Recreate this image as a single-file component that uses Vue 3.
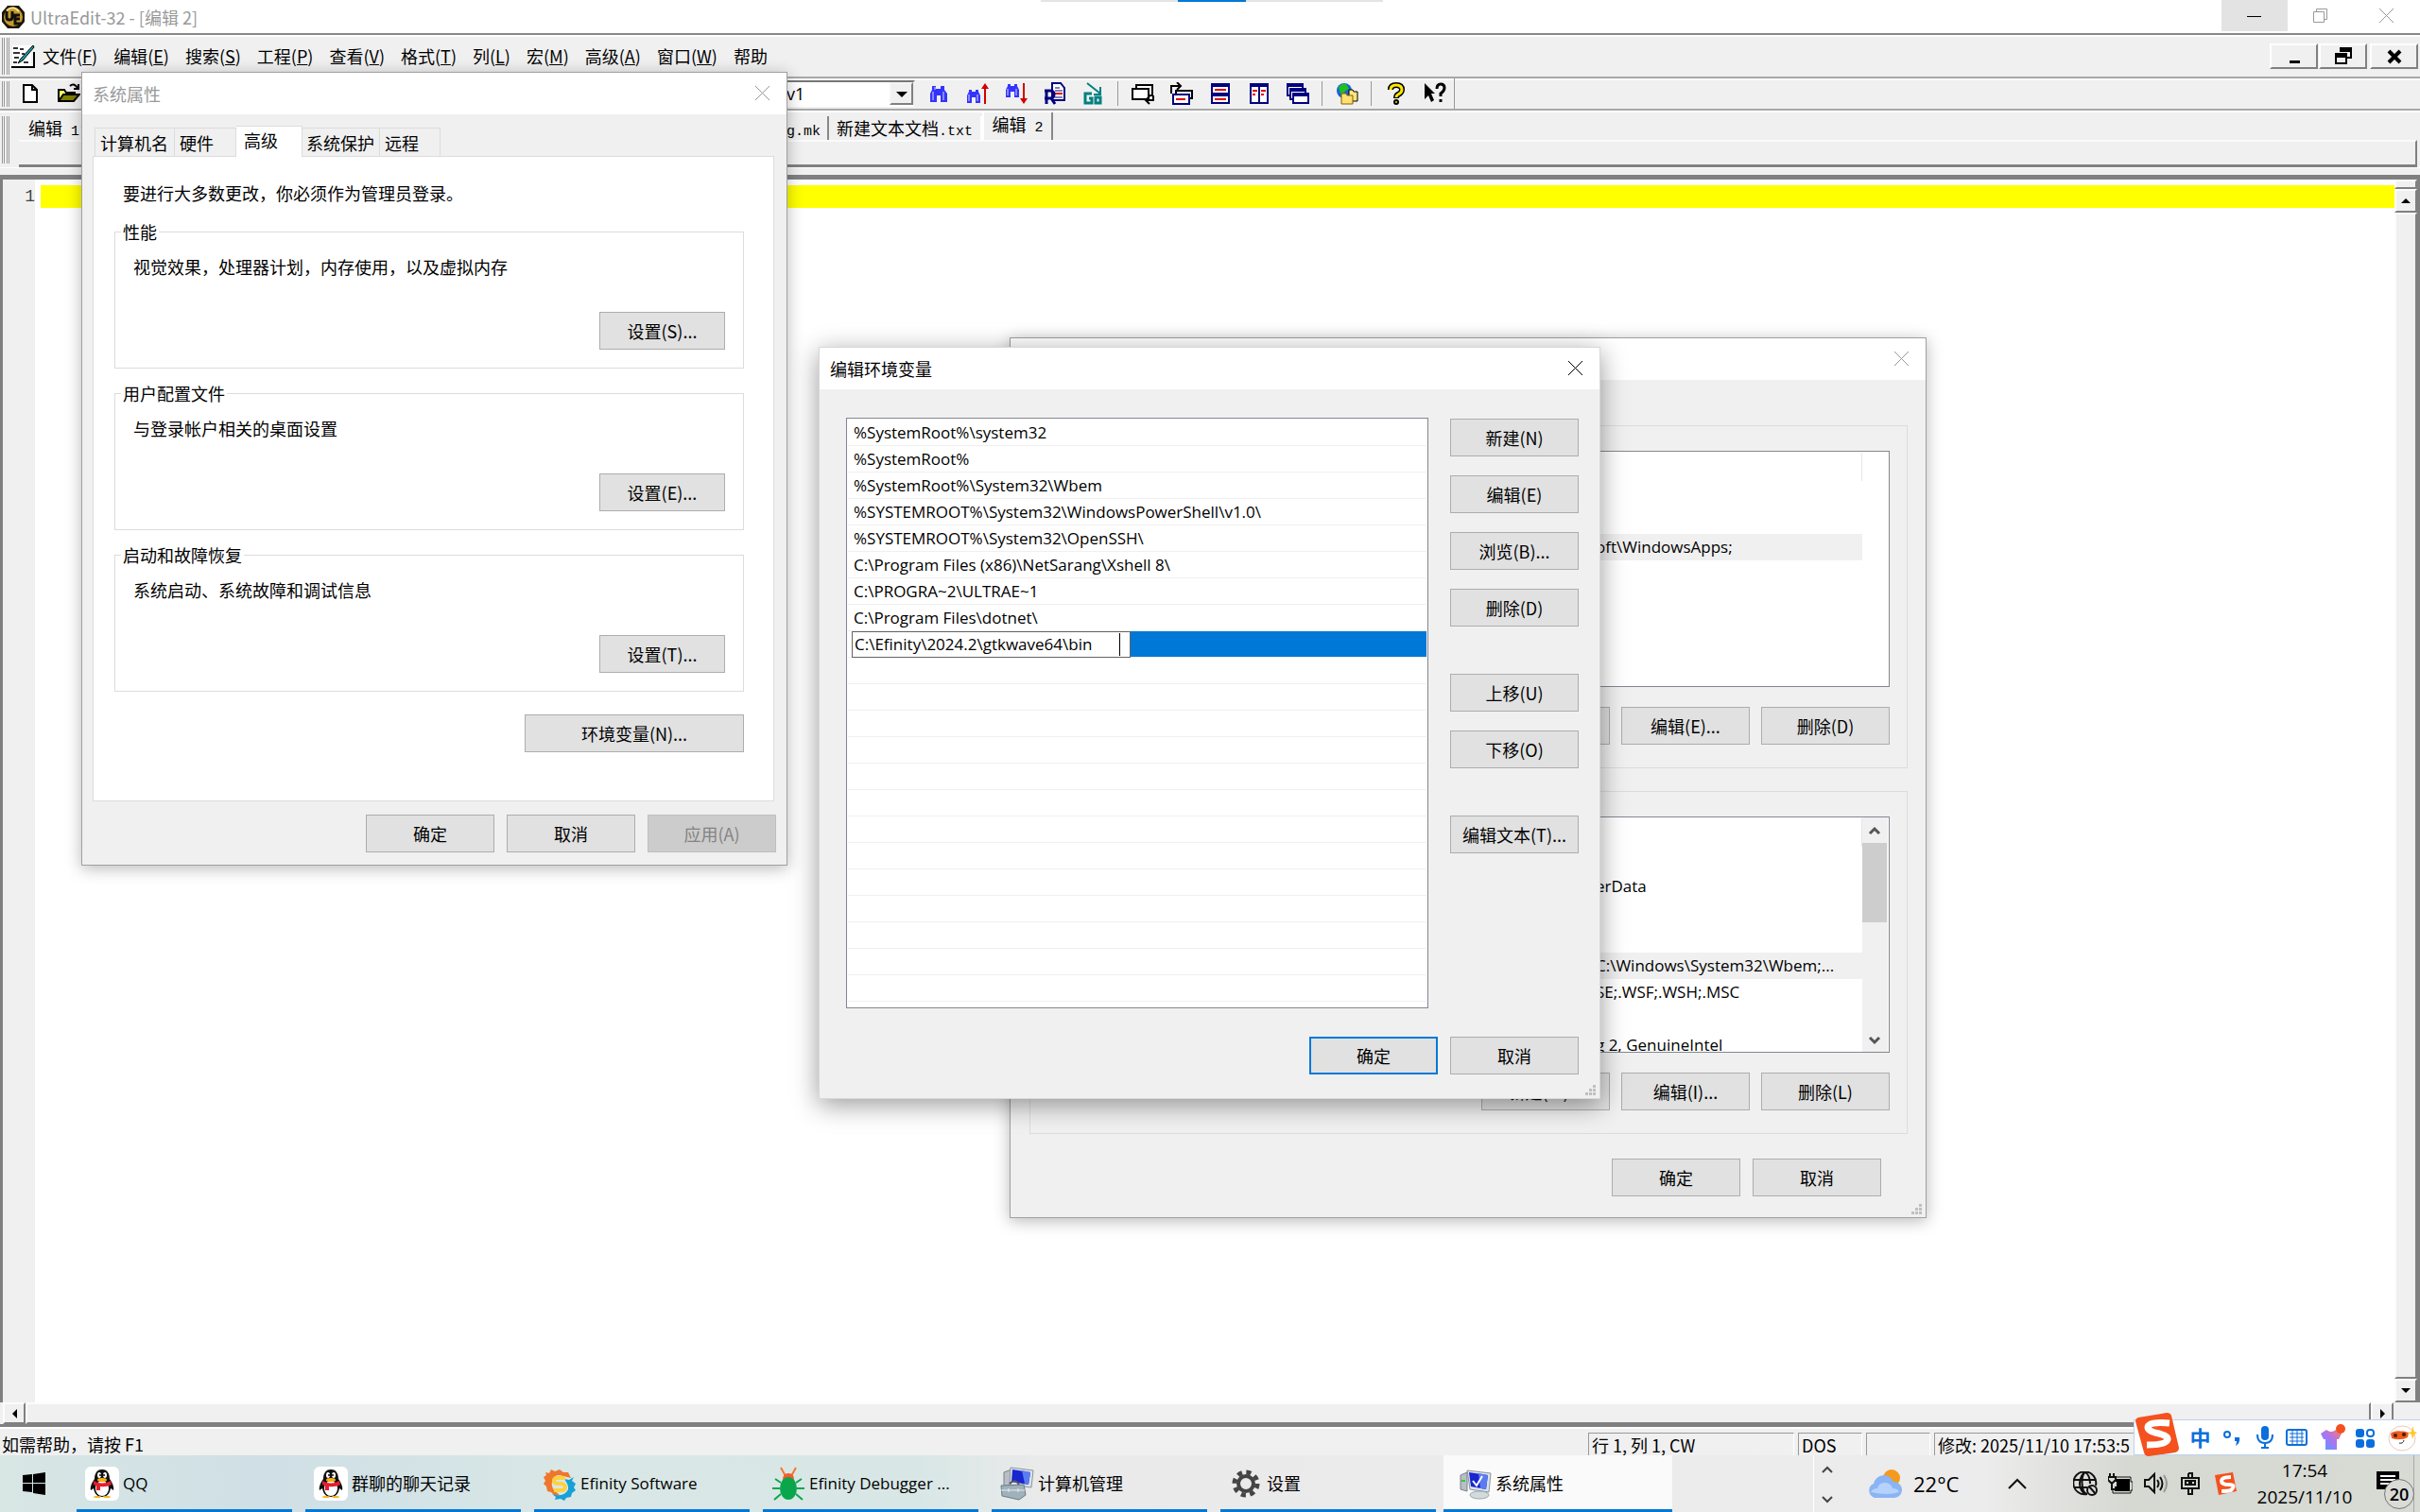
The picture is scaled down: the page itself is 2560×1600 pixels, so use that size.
<script setup>
import { ref } from 'vue'

const menus = [
  { text: '文件', key: 'F' },
  { text: '编辑', key: 'E' },
  { text: '搜索', key: 'S' },
  { text: '工程', key: 'P' },
  { text: '查看', key: 'V' },
  { text: '格式', key: 'T' },
  { text: '列', key: 'L' },
  { text: '宏', key: 'M' },
  { text: '高级', key: 'A' },
  { text: '窗口', key: 'W' },
  { text: '帮助' }
]

const propTabs = ['计算机名', '硬件', '高级', '系统保护', '远程']
const activeTab = ref('高级')

const groups = [
  { title: '性能', text: '视觉效果，处理器计划，内存使用，以及虚拟内存', button: '设置(S)...' },
  { title: '用户配置文件', text: '与登录帐户相关的桌面设置', button: '设置(E)...' },
  { title: '启动和故障恢复', text: '系统启动、系统故障和调试信息', button: '设置(T)...' }
]

const userVars = ['', '', 'oft\\WindowsApps;', '', '', '']
const systemVars = [
  '',
  '',
  'erData',
  '',
  '',
  'C:\\Windows\\System32\\Wbem;...',
  'SE;.WSF;.WSH;.MSC',
  '',
  'g 2, GenuineIntel'
]

const paths = [
  '%SystemRoot%\\system32',
  '%SystemRoot%',
  '%SystemRoot%\\System32\\Wbem',
  '%SYSTEMROOT%\\System32\\WindowsPowerShell\\v1.0\\',
  '%SYSTEMROOT%\\System32\\OpenSSH\\',
  'C:\\Program Files (x86)\\NetSarang\\Xshell 8\\',
  'C:\\PROGRA~2\\ULTRAE~1',
  'C:\\Program Files\\dotnet\\'
]
const editing = ref('C:\\Efinity\\2024.2\\gtkwave64\\bin')
const emptyRows = 13

const tasks = [
  { icon: 'qq', text: 'QQ' },
  { icon: 'qq', text: '群聊的聊天记录' },
  { icon: 'efinity', text: 'Efinity Software' },
  { icon: 'bug', text: 'Efinity Debugger ...' },
  { icon: 'manage', text: '计算机管理' },
  { icon: 'gear', text: '设置' },
  { icon: 'system', text: '系统属性', active: true }
]

function isLatin(text) {
  return /^[\x20-\x7e]+$/.test(text)
}
</script>

<template>
  <div class="screen">
    <!-- UltraEdit -->
    <header class="titlebar">
      <svg class="app-icon" width="26" height="26" viewBox="0 0 26 26">
        <path d="M7 1h12l6 7v10l-6 7H7l-6-7V8z" fill="#1a1608" />
        <circle cx="13" cy="13" r="10" fill="#c79a2c" />
        <path d="M6 6q7-6 13 1" stroke="#f5e08b" stroke-width="2" fill="none" />
        <path d="M6 7v6q0 3 3 3t3-3V7M20 11h-5v9h6M15 15h5" stroke="#111" stroke-width="3" fill="none" />
      </svg>
      <span class="caption">UltraEdit-32 - [编辑 2]</span>
      <div class="top-hint"><i></i></div>
      <div class="caption-buttons">
        <button class="cap min" aria-label="最小化">
          <svg width="16" height="16"><path d="M0 8.5h15" stroke="#000" /></svg>
        </button>
        <button class="cap" aria-label="还原">
          <svg width="16" height="16"><path d="M.5 3.500h11v11H.5zM3.500 3V.5h11v11H12" stroke="#999" fill="none" /></svg>
        </button>
        <button class="cap" aria-label="关闭">
          <svg width="16" height="16"><path d="M0 0l15 15M15 0L0 15" stroke="#999" /></svg>
        </button>
      </div>
    </header>

    <nav class="menubar">
      <i class="grip"></i>
      <svg class="doc-icon" width="25" height="25" viewBox="0 0 25 25">
        <path d="M1 1h20v22H1z" fill="#fff" />
        <path d="M0 24h24V8" stroke="#000" stroke-width="2" fill="none" />
        <path d="M2 3h5v2H2zM9 4h4v2H9zM2 8h7v2H2zM11 9h3v2h-3zM3 13h5v2H3zM2 18h4v2H2zM13 18h5v2h-5z" fill="#333" />
        <path d="M23 1L10 15l-3 5 5-3L24 3z" fill="#18a0a8" stroke="#000" />
      </svg>
      <a v-for="m in menus" :key="m.text" href="#" class="menu">{{ m.text }}<template v-if="m.key">(<u>{{ m.key }}</u>)</template></a>
      <div class="mdi-buttons">
        <button aria-label="最小化子窗口"><svg width="18" height="18"><path d="M4 14h11v3H4z" /></svg></button>
        <button aria-label="还原子窗口">
          <svg width="18" height="18"><path d="M5 1h12v10h-4M6 2h10v2H6zM1 7h11v10H1zM1 8h10v2H1z" fill="none" stroke="#000" stroke-width="2" /></svg>
        </button>
        <button class="apart" aria-label="关闭子窗口"><svg width="18" height="18"><path d="M3 4l12 12M15 4L3 16" stroke="#000" stroke-width="4" /></svg></button>
      </div>
    </nav>

    <div class="toolbar">
      <i class="grip"></i>
      <button aria-label="新建">
        <svg width="24" height="24"><path d="M5 3h9l5 5v13H5zM14 3v5h5" fill="#fff" stroke="#000" stroke-width="2" /></svg>
      </button>
      <button aria-label="打开">
        <svg width="24" height="24">
          <path d="M1 20V8h6l2 3h9v4" fill="#ff6" stroke="#000" stroke-width="2" />
          <path d="M1 20l5-7h17l-6 7z" fill="#808000" stroke="#000" stroke-width="2" />
          <path d="M13 4q4-4 8 2M22 2v5h-5" fill="none" stroke="#000" stroke-width="2" />
        </svg>
      </button>
      <div class="combo">
        <select aria-label="查找内容"><option>v1</option></select>
        <span class="combo-arrow"></span>
      </div>
      <button aria-label="查找">
        <svg width="24" height="24">
          <path d="M3 21v-9l2-4V4h4v3h5V4h4v4l3 4v9h-7v-7h-4v7z" fill="#33f" />
          <path d="M6 10v9M17 10v9M8 5v3" stroke="#dde" stroke-width="1" />
        </svg>
      </button>
      <button aria-label="查找上一个">
        <svg width="24" height="24">
          <path d="M1 22v-8l2-4V8h3v2h4V8h3v2l2 4v8h-5v-6H6v6z" fill="#33f" />
          <path d="M3 13v7M12 13v7" stroke="#dde" />
          <path d="M20 23V5" stroke="#d00000" stroke-width="2" /><path d="M16 7l4-6 4 6z" fill="#d00000" />
        </svg>
      </button>
      <button aria-label="查找下一个">
        <svg width="24" height="24">
          <path d="M1 16V8l2-4V2h3v2h4V2h3v2l2 4v8h-5v-6H6v6z" fill="#33f" />
          <path d="M3 7v7M12 7v7" stroke="#dde" />
          <path d="M20 1v18" stroke="#d00000" stroke-width="2" /><path d="M16 17l4 6 4-6z" fill="#d00000" />
        </svg>
      </button>
      <button aria-label="替换">
        <svg width="24" height="24">
          <path d="M9 1h9l4 5v13H9z" fill="#fff" stroke="#000080" stroke-width="2" />
          <path d="M12 6h5M12 9h8M12 16h8" stroke="#000080" /><path d="M12 12h8" stroke="#e00000" stroke-width="2" />
          <path d="M1 9h6q4 0 4 4t-4 4H1M8 17l4 6M3 8v15" stroke="#000080" stroke-width="3" fill="none" />
        </svg>
      </button>
      <button aria-label="转到">
        <svg width="24" height="24">
          <path d="M5 1l14 11M19 5v8h-7" stroke="#008080" fill="none" stroke-width="2" />
          <path d="M10 12H3v10h7v-5H7M14 16h5v6h-5z" stroke="#008080" stroke-width="3" fill="none" />
        </svg>
      </button>
      <i class="sep"></i>
      <button aria-label="下一窗口">
        <svg width="24" height="24">
          <path d="M5 3h17v11H5z" fill="#fff" stroke="#000" stroke-width="2" /><path d="M1 7h17v11H1z" fill="#fff" stroke="#000" stroke-width="2" />
          <path d="M23 14v5h-7M19 15l-4 4 4 4" stroke="#000" stroke-width="2" fill="none" />
        </svg>
      </button>
      <button aria-label="上一窗口">
        <svg width="24" height="24">
          <path d="M6 9h17v8H6z" fill="#fff" stroke="#000" stroke-width="2" /><path d="M3 13h17v10H3z" fill="#fff" stroke="#000080" stroke-width="2" />
          <path d="M6 18h10" stroke="#e00000" stroke-width="2" /><path d="M1 12V4h9M7 0l4 4-4 4" stroke="#000" stroke-width="2" fill="none" />
        </svg>
      </button>
      <button aria-label="水平平铺">
        <svg width="24" height="24">
          <path d="M2 1h20v22H2z" fill="#000080" /><path d="M4 5h16v6H4zM4 15h16v6H4z" fill="#fff" /><path d="M6 8h12M6 18h12" stroke="#e00000" stroke-width="2" />
        </svg>
      </button>
      <button aria-label="垂直平铺">
        <svg width="24" height="24">
          <path d="M2 1h20v22H2z" fill="#000080" /><path d="M4 5h7v16H4zM13 5h7v16h-7z" fill="#fff" />
          <path d="M5 9h5M5 13h3M14 9h5M14 13h3" stroke="#e00000" stroke-width="2" />
        </svg>
      </button>
      <button aria-label="层叠">
        <svg width="24" height="24">
          <g fill="#fff" stroke="#000080" stroke-width="2">
            <path d="M1 2h16v12H1zM1 4h16" /><path d="M4 7h16v11H4zM4 9h16" /><path d="M7 12h16v10H7zM7 14h16" />
          </g>
        </svg>
      </button>
      <i class="sep"></i>
      <button aria-label="网络">
        <svg width="24" height="24">
          <circle cx="9" cy="9" r="8" fill="#1565d8" /><path d="M3 5q4-5 8-3l3 5-5 3 2 5-6-3z" fill="#20c020" />
          <path d="M14 8h4l1 2h4v10h-9z" fill="#ffe680" stroke="#000" /><path d="M6 12h5l1 2h6v9H6z" fill="#ffe070" stroke="#806000" />
        </svg>
      </button>
      <i class="sep"></i>
      <button aria-label="帮助主题">
        <svg width="24" height="24">
          <path d="M6 8q0-5 6-5t6 5q0 3-4 5-2 1-2 4" stroke="#000" stroke-width="6" fill="none" /><circle cx="12" cy="21" r="3" />
          <path d="M6 8q0-5 6-5t6 5q0 3-4 5-2 1-2 3" stroke="#ffe600" stroke-width="3" fill="none" /><circle cx="12" cy="21" r="1" fill="#ffe600" />
        </svg>
      </button>
      <button aria-label="这是什么">
        <svg width="24" height="24">
          <path d="M1 1l11 11H8l3 7-3 2-3-7-4 4z" /><path d="M14 7q0-5 4-5t4 4q0 3-4 6v3M18 18v3" stroke="#000" stroke-width="3" fill="none" />
        </svg>
      </button>
      <i class="toolbar-end"></i>
    </div>

    <div class="filetabs">
      <i class="grip"></i>
      <div class="filetabs-body">
        <div class="filetabs-row">
          <button class="ftab first">编辑<span class="mono">&nbsp;1*</span></button>
          <button class="ftab mk"><span class="mono">g.mk</span></button>
          <button class="ftab txt">新建文本文档<span class="mono">.txt</span></button>
          <button class="ftab current">编辑<span class="mono">&nbsp;2</span></button>
        </div>
        <div class="filetabs-page"></div>
      </div>
    </div>

    <main class="editor">
      <div class="gutter">1</div>
      <div class="code"><div class="current-line"></div></div>
      <div class="vscroll">
        <span class="raised split"></span>
        <button class="raised sb" aria-label="向上滚动"><i class="tri up"></i></button>
        <span class="raised thumb"></span>
        <button class="raised sb" aria-label="向下滚动"><i class="tri down"></i></button>
      </div>
    </main>
    <div class="hscroll">
      <button class="raised sb" aria-label="向左滚动"><i class="tri left"></i></button>
      <span class="raised thumb"></span>
      <button class="raised sb" aria-label="向右滚动"><i class="tri right"></i></button>
      <span class="corner"></span>
    </div>

    <footer class="status">
      <span class="status-help">如需帮助，请按 F1</span>
      <span class="cell pos">行 1, 列 1, CW</span>
      <span class="cell fmt">DOS</span>
      <span class="cell blank"></span>
      <span class="cell time">修改: 2025/11/10 17:53:5</span>
    </footer>

    <!-- taskbar -->
    <div class="taskbar">
      <button class="start" aria-label="开始">
        <svg width="24" height="24" viewBox="0 0 24 24"><path d="M0 3l10-1v9H0zM11 2l13-2v11H11zM0 12h10v9L0 20zM11 12h13v12l-13-2z" /></svg>
      </button>
      <button v-for="t in tasks" :key="t.text" class="task" :class="{ active: t.active }">
        <svg v-if="t.icon === 'qq'" width="36" height="36" viewBox="0 0 36 36">
          <rect width="36" height="36" rx="6" fill="#fff" />
          <path d="M18 3c-6 0-8 5-8 10-3 4-5 9-4 12l3-2c1 6 4 9 9 9s8-3 9-9l3 2c1-3-1-8-4-12 0-5-2-10-8-10z" fill="#111" />
          <ellipse cx="18" cy="23" rx="7" ry="8" fill="#fff" />
          <ellipse cx="15" cy="9" rx="2" ry="3" fill="#fff" /><ellipse cx="21" cy="9" rx="2" ry="3" fill="#fff" />
          <circle cx="16" cy="9" r="1" /><circle cx="20" cy="9" r="1" />
          <ellipse cx="18" cy="14" rx="5" ry="2" fill="#f9b016" />
          <path d="M9 15q9 5 18 0l1 4q-6 3-12 2v4h-4v-5l-3-1z" fill="#e81d2c" />
          <ellipse cx="13" cy="32" rx="4" ry="1" fill="#f9b016" /><ellipse cx="23" cy="32" rx="4" ry="1" fill="#f9b016" />
        </svg>
        <svg v-else-if="t.icon === 'efinity'" width="36" height="36" viewBox="0 0 36 36">
          <path d="M3 6l4 1 2-4 4 2 5-2 4 3h5l3 6-8-2q-8-3-11 3t1 12l6 5-5 1-4-4-4-1-1-5-3-3 2-3-2-4 3-2z" fill="#f0762b" />
          <path d="M33 11l-2 4 4 3-2 4 2 3-4 3-1 4-5 1-2 3-4-2-6 1 1-3-4-3q9 3 14-1t2-10l-3-5 5 1z" fill="#18a0d8" />
          <path d="M24 12h-8q-4 0-4 3t5 3h3q4 1 4 4t-5 3h-7" stroke="#ffd23c" stroke-width="4" fill="none" />
        </svg>
        <svg v-else-if="t.icon === 'bug'" width="36" height="36" viewBox="0 0 36 36">
          <path d="M10 1l5 9M26 1l-5 9" stroke="#f07a2a" stroke-width="2" /><path d="M12 14q0-7 6-7t6 7z" fill="#fb5a2c" />
          <ellipse cx="18" cy="23" rx="9" ry="12" fill="#0aa64b" />
          <path d="M10 17l-6-4M26 17l6-4M9 23H1M27 23h8M10 29l-7 6M26 29l7 6" stroke="#0aa64b" stroke-width="2" />
        </svg>
        <svg v-else-if="t.icon === 'manage'" width="36" height="36" viewBox="0 0 36 36">
          <path d="M4 6l8-3v20l-8-2z" fill="#b8bfc6" stroke="#78828a" /><path d="M11 1l24 3-2 18-23-3z" fill="#dce4ea" stroke="#8a949c" />
          <path d="M13 3l19 3-2 13-18-3z" fill="#1726cf" /><path d="M23 4l9 2-2 13-4-1z" fill="#5a7cf0" />
          <path d="M10 18q6-6 10 1" stroke="#556" stroke-width="2" fill="none" /><path d="M1 20l24-1 2 11-7 5-18-4z" fill="#9fb1bb" stroke="#6a7a84" />
          <path d="M1 25h25M9 23v4M19 23v4" stroke="#e6eef2" />
        </svg>
        <svg v-else-if="t.icon === 'gear'" width="36" height="36" viewBox="0 0 36 36">
          <circle cx="18" cy="18" r="8" fill="none" stroke="#444" stroke-width="4" />
          <circle cx="18" cy="18" r="12" fill="none" stroke="#444" stroke-width="5" stroke-dasharray="5 4.425" />
        </svg>
        <svg v-else width="36" height="36" viewBox="0 0 36 36">
          <path d="M3 9l7-3v20l-7-2z" fill="#b8bfc6" stroke="#78828a" /><path d="M4 15h4" stroke="#3c3" stroke-width="2" />
          <path d="M10 4l25 3-2 20-20-3z" fill="#dce4ea" stroke="#8a949c" /><path d="M12 6l20 3-2 15-16-3z" fill="#1726cf" />
          <path d="M22 7l10 2-2 15-6-1z" fill="#5a7cf0" /><path d="M16 15l4 5 6-10" stroke="#fff" stroke-width="2" fill="none" />
          <ellipse cx="23" cy="30" rx="10" ry="4" fill="#d3dade" stroke="#9aa" />
        </svg>
        <span :class="{ latin: isLatin(t.text) }">{{ t.text }}</span>
      </button>
      <div class="pager">
        <svg width="12" height="8"><path d="M1 7l5-5 5 5" fill="none" stroke="#444" stroke-width="2" /></svg>
        <svg width="12" height="8"><path d="M1 1l5 5 5-5" fill="none" stroke="#444" stroke-width="2" /></svg>
      </div>
      <div class="weather">
        <svg width="38" height="32" viewBox="0 0 38 32">
          <circle cx="27" cy="10" r="9" fill="#f49a1c" />
          <path d="M9 31a8 8 0 0 1-1-15 11 11 0 0 1 21-2 8 8 0 0 1 1 17z" fill="#8ab4f4" />
          <path d="M12 21q2-7 9-6 6 1 7 6 6 0 7 4-12 4-30 0 2-4 7-4z" fill="#b4d2fb" />
        </svg>
        <span>22°C</span>
      </div>
      <div class="tray">
        <svg class="caret" width="20" height="12"><path d="M1 11l9-9 9 9" fill="none" stroke="#111" stroke-width="2" /></svg>
        <svg width="26" height="26" viewBox="0 0 26 26" fill="none" stroke="#111">
          <path d="M15 24a12 12 0 1 1 9-9M15 24c-7-1-7-22-2-23M13 1c3 2 5 7 5 12M1 9h23M1 17h14M7 13c0-6 3-11 6-12M7 13c0 5 3 10 6 11" stroke-width="2" />
          <circle cx="20" cy="20" r="5" stroke-width="2" /><path d="M17 16l7 8" stroke-width="2" />
        </svg>
        <svg width="26" height="26" viewBox="0 0 26 26">
          <path d="M7 8h16v13H7v-5h2v-5H7z" fill="#000" /><path d="M5 20v3h19v-3h2v-9h-2V6H9" fill="none" stroke="#111" />
          <path d="M2 2v4M6 2v4M0 6h8v3l-3 3H3L0 9zM4 12v7h4" fill="none" stroke="#111" stroke-width="2" />
        </svg>
        <svg width="26" height="26" viewBox="0 0 26 26" fill="none" stroke="#111" stroke-width="2">
          <path d="M2 9h4l6-6v19l-6-6H2zM15 9q3 4 0 8M18 6q5 7 0 14" /><path d="M22 4q6 9 0 18" stroke="#999" />
        </svg>
        <svg width="26" height="26" viewBox="0 0 26 26" fill="none" stroke="#111" stroke-width="2">
          <path d="M4 7h18v11H4zM11 2h4v5M11 2v5M11 18v6h4v-6M8 10h4v4H8zM14 10h4v4h-4z" />
        </svg>
        <svg width="26" height="26" viewBox="0 0 26 26">
          <path d="M2 4l19-3 4 20-19 4z" fill="#f4511e" /><path d="M19 6q-10 0-10 4t8 4 2 6q-3 1-10 1" fill="none" stroke="#fff" stroke-width="4" />
        </svg>
      </div>
      <div class="clock"><span>17:54</span><span>2025/11/10</span></div>
      <button class="notify" aria-label="通知">
        <svg width="26" height="26"><path d="M0 0h24v19h-9l-5 6v-6H0z" fill="#000" /><path d="M4 5h16M4 9h16M4 13h16" stroke="#fff" stroke-width="2" /></svg>
        <span class="badge">20</span>
      </button>
      <i class="show-desktop"></i>
    </div>

    <!-- input method bar -->
    <div class="ime">
      <svg class="ime-logo" width="48" height="46" viewBox="0 0 48 46">
        <path d="M1 9q0-3 3-4L34 0q4 0 5 3l8 34q0 4-4 5l-28 4q-4 0-5-4z" fill="#f4511e" />
        <path d="M37 11q-22-2-23 4 0 5 12 7 12 3 8 8-3 4-21 4" fill="none" stroke="#fff" stroke-width="7" />
      </svg>
      <span class="ime-mode">中</span>
      <svg width="24" height="24"><circle cx="7" cy="9" r="3" fill="none" stroke="#0a6fdb" stroke-width="2" /><path d="M15 12h5q1 6-4 9 1-3 1-5h-2z" fill="#0a6fdb" /></svg>
      <svg width="24" height="24"><rect x="8" y="0" width="8" height="15" rx="4" fill="#0a6fdb" /><path d="M4 9q0 9 8 9t8-9M12 18v5M8 23h8" stroke="#0a6fdb" stroke-width="2" fill="none" /></svg>
      <svg width="24" height="24"><rect x="1" y="4" width="21" height="16" rx="2" fill="none" stroke="#0a6fdb" stroke-width="2" /><path d="M4 8h15M4 12h15M4 16h15M7 5v14M12 5v14M17 5v14" stroke="#0a6fdb" /></svg>
      <svg width="28" height="28">
        <defs><linearGradient id="shirt" x1="0" y1="1" x2="1" y2="0"><stop offset="0" stop-color="#4aa3ff" /><stop offset=".5" stop-color="#a874f5" /><stop offset="1" stop-color="#ff7a6a" /></linearGradient></defs>
        <path d="M8 6q5 4 10 0l6 4-3 6h-2v11H7V16H5L2 10z" fill="url(#shirt)" /><circle cx="23" cy="5" r="5" fill="#f4511e" />
      </svg>
      <svg width="24" height="24" fill="#0a6fdb"><rect x="1" y="3" width="9" height="9" rx="3" /><rect x="1" y="14" width="9" height="9" rx="3" /><rect x="12" y="14" width="9" height="9" rx="3" /><rect x="13" y="4" width="7" height="7" rx="3" fill="none" stroke="#0a6fdb" stroke-width="2" /></svg>
      <svg width="32" height="32">
        <ellipse cx="15" cy="17" rx="14" ry="13" fill="#fff" stroke="#e9c9c0" /><path d="M3 12q5-5 19-1l-1 5q-8 4-17 1z" fill="#ef5b1d" />
        <circle cx="8" cy="14" r="2" fill="#4a1a08" /><circle cx="17" cy="13" r="2" fill="#4a1a08" /><path d="M12 22q4 1 5-3" stroke="#222" fill="none" /><path d="M26 4l2 6 3 1-3 2-2 5-1-5-4-2 4-1z" fill="#ffc928" />
      </svg>
    </div>

    <!-- system properties -->
    <section class="dialog props" aria-label="系统属性">
      <div class="dlg-title muted">
        <span>系统属性</span>
        <button class="close" aria-label="关闭"><svg width="16" height="16"><path d="M0 0l15 15M15 0L0 15" stroke="#999" /></svg></button>
      </div>
      <div class="props-body">
        <div class="ptabs">
          <button v-for="t in propTabs" :key="t" :class="{ on: t === activeTab }" @click="activeTab = t">{{ t }}</button>
        </div>
        <div class="pane">
          <p>要进行大多数更改，你必须作为管理员登录。</p>
          <fieldset v-for="g in groups" :key="g.title">
            <legend>{{ g.title }}</legend>
            <p>{{ g.text }}</p>
            <button class="btn">{{ g.button }}</button>
          </fieldset>
          <button class="btn env">环境变量(N)...</button>
        </div>
        <div class="actions">
          <button class="btn">确定</button>
          <button class="btn">取消</button>
          <button class="btn" disabled>应用(A)</button>
        </div>
      </div>
    </section>

    <!-- environment variables -->
    <section class="dialog envs" aria-label="环境变量">
      <div class="dlg-title muted">
        <span></span>
        <button class="close" aria-label="关闭"><svg width="16" height="16"><path d="M0 0l15 15M15 0L0 15" stroke="#999" /></svg></button>
      </div>
      <div class="envs-body">
        <div class="env-group">
          <div class="env-list">
            <div class="env-rows">
              <i class="col-line"></i>
              <div v-for="(v, i) in userVars" :key="i" class="env-row" :class="{ hl: i === 2 }">{{ v }}</div>
            </div>
            <span class="no-scroll"></span>
          </div>
          <div class="env-actions">
            <button class="btn">新建(N)...</button>
            <button class="btn">编辑(E)...</button>
            <button class="btn">删除(D)</button>
          </div>
        </div>
        <div class="env-group">
          <div class="env-list">
            <div class="env-rows">
              <i class="col-line"></i>
              <div v-for="(v, i) in systemVars.slice(1)" :key="i" class="env-row" :class="{ hl: i === 4 }">{{ v }}</div>
            </div>
            <div class="flat-scroll">
              <svg width="26" height="26"><path d="M8 17l5-5 5 5" fill="none" stroke="#555" stroke-width="3" /></svg>
              <span></span>
              <svg width="26" height="26"><path d="M8 11l5 5 5-5" fill="none" stroke="#555" stroke-width="3" /></svg>
            </div>
          </div>
          <div class="env-actions">
            <button class="btn">新建(W)...</button>
            <button class="btn">编辑(I)...</button>
            <button class="btn">删除(L)</button>
          </div>
        </div>
        <div class="envs-bottom">
          <button class="btn">确定</button>
          <button class="btn">取消</button>
        </div>
      </div>
      <svg class="size-grip" width="12" height="12"><path d="M8 0h3v3H8zM4 4h3v3H4zM8 4h3v3H8zM0 8h3v3H0zM4 8h3v3H4zM8 8h3v3H8z" fill="#bfbfbf" /></svg>
    </section>

    <!-- edit environment variable -->
    <section class="dialog edit" aria-label="编辑环境变量">
      <div class="dlg-title">
        <span>编辑环境变量</span>
        <button class="close" aria-label="关闭"><svg width="16" height="16"><path d="M0 0l15 15M15 0L0 15" stroke="#000" /></svg></button>
      </div>
      <div class="edit-body">
        <div class="path-list">
          <div v-for="p in paths" :key="p" class="path-row">{{ p }}</div>
          <div class="path-row selected">
            <input v-model="editing" aria-label="路径" spellcheck="false" />
            <i class="text-caret"></i>
          </div>
          <div v-for="n in emptyRows" :key="n" class="path-row"></div>
        </div>
        <div class="side">
          <button class="btn">新建(N)</button>
          <button class="btn">编辑(E)</button>
          <button class="btn">浏览(B)...</button>
          <button class="btn">删除(D)</button>
          <button class="btn spaced">上移(U)</button>
          <button class="btn">下移(O)</button>
          <button class="btn spaced">编辑文本(T)...</button>
        </div>
      </div>
      <div class="edit-bottom">
        <button class="btn default">确定</button>
        <button class="btn">取消</button>
      </div>
      <svg class="size-grip" width="12" height="12"><path d="M8 0h3v3H8zM4 4h3v3H4zM8 4h3v3H8zM0 8h3v3H0zM4 8h3v3H4zM8 8h3v3H8z" fill="#bfbfbf" /></svg>
    </section>
  </div>
</template>

<style>
body {
  margin: 0;
  overflow: hidden;
}
</style>

<style scoped>
* {
  box-sizing: border-box;
}
.screen {
  position: relative;
  display: flex;
  flex-direction: column;
  height: 100vh;
  overflow: hidden;
  background: #f0f0f0;
  color: #000;
  font-family: 'Open Sans', 'Noto Sans CJK SC', sans-serif;
  font-size: 18px;
  line-height: 24px;
}
button {
  font: inherit;
  color: inherit;
  padding: 0;
  border: 0;
  background: none;
  white-space: nowrap;
}
svg {
  display: block;
  flex: none;
}
p {
  margin: 0;
}
.latin {
  font-size: 17px;
}

/* title bar */
.titlebar {
  position: relative;
  display: flex;
  align-items: center;
  height: 35px;
  flex: none;
  background: #fff;
}
.app-icon {
  margin-left: 1px;
}
.caption {
  margin-left: 5px;
  color: #999;
  font-family: 'Noto Sans CJK SC', sans-serif;
}
.top-hint {
  position: absolute;
  top: 0;
  left: 43%;
  width: 362px;
  height: 2px;
  background: #e4e4e4;
}
.top-hint i {
  display: block;
  width: 72px;
  height: 2px;
  margin: 0 auto;
  background: #0078d7;
}
.caption-buttons {
  display: flex;
  align-self: flex-start;
  margin-left: auto;
}
.cap {
  display: flex;
  align-items: center;
  justify-content: center;
  width: 70px;
  height: 33px;
}
.cap.min {
  background: #e3e3e3;
}

/* menu */
.menubar {
  display: flex;
  align-items: center;
  height: 48px;
  flex: none;
  border-top: 2px solid #888;
  border-bottom: 2px solid #a8a8a8;
  box-shadow: inset 0 2px #fff;
  font-family: 'Noto Sans CJK SC', sans-serif;
}
.grip {
  align-self: stretch;
  width: 8px;
  margin: 3px 4px 2px 2px;
  border-left: 3px double #999;
  border-right: 3px double #999;
}
.menubar .grip {
  margin-right: 2px;
}
.menu {
  margin-left: 8px;
  margin-right: 9px;
  color: #000;
  text-decoration: none;
}
.mdi-buttons {
  display: flex;
  gap: 1px;
  margin-left: auto;
  margin-right: 2px;
}
.mdi-buttons button {
  display: flex;
  align-items: center;
  justify-content: center;
  width: 51px;
  height: 27px;
  border: 2px solid #808080;
  border-top-color: #fff;
  border-left-color: #fff;
}
.mdi-buttons .apart {
  margin-left: 2px;
}

/* toolbar */
.toolbar {
  display: flex;
  align-items: center;
  height: 34px;
  flex: none;
  border-bottom: 2px solid #a8a8a8;
  box-shadow: inset 0 2px #fafafa;
}
.toolbar .grip {
  margin-right: 1px;
}
.toolbar button {
  display: flex;
  justify-content: center;
  width: 41px;
}
.combo {
  position: relative;
  width: 168px;
  height: 28px;
  margin-left: 707px;
  margin-right: 4px;
  border: 2px solid #777;
  border-right-color: #eee;
  border-bottom-color: #fff;
  background: #fff;
}
.combo select {
  appearance: none;
  width: 100%;
  height: 24px;
  padding: 0 0 0 30px;
  border: 0;
  background: #fff;
  font: inherit;
  line-height: 24px;
}
.combo-arrow {
  position: absolute;
  top: 0;
  right: 0;
  width: 25px;
  height: 24px;
  border: 2px solid #808080;
  border-top-color: #f4f4f4;
  border-left-color: #f4f4f4;
  background: #f0f0f0;
}
.combo-arrow::after {
  content: '';
  position: absolute;
  left: 5px;
  top: 8px;
  border: 6px solid transparent;
  border-top-color: #000;
  border-bottom: 0;
}
.sep {
  width: 11px;
  height: 26px;
  flex: none;
  background: linear-gradient(#999, #999) 5px 0 / 1px 100% no-repeat;
}
.toolbar-end {
  align-self: stretch;
  border-left: 1px solid #999;
}

/* open files */
.filetabs {
  display: flex;
  height: 61px;
  flex: none;
  padding-top: 2px;
  border-bottom: 1px solid #fff;
  box-shadow: inset 0 2px #fff;
}
.filetabs .grip {
  margin: 4px 10px 4px 2px;
}
.filetabs-body {
  flex: 1;
  display: flex;
  flex-direction: column;
  margin-right: 3px;
}
.filetabs-row {
  display: flex;
  align-items: flex-end;
  height: 29px;
}
.ftab {
  height: 25px;
  border-right: 2px solid #888;
  font-family: 'Noto Sans CJK SC', sans-serif;
}
.mono {
  font-family: 'Liberation Mono', monospace;
  font-size: 15px;
}
.ftab.first {
  width: 100px;
  padding-left: 10px;
  text-align: left;
}
.ftab.mk {
  width: 82px;
  margin-left: 675px;
  padding-right: 7px;
  text-align: right;
}
.ftab.txt {
  width: 162px;
  border-right-color: #fff;
}
.ftab.current {
  width: 75px;
  height: 29px;
  padding-bottom: 3px;
  border-left: 2px solid #fff;
}
.filetabs-page {
  flex: 1;
  border-top: 2px solid #fafafa;
  border-right: 2px solid #808080;
  border-bottom: 3px solid #808080;
}

/* text area */
.editor {
  display: flex;
  flex: 1;
  min-height: 0;
  margin-top: 7px;
  border: 3px solid #808080;
  border-top-width: 5px;
  border-bottom: 0;
  background: #fff;
}
.gutter {
  width: 34px;
  padding-top: 6px;
  background: #f0f0f0;
  color: #444;
  font-family: 'Liberation Mono', monospace;
  text-align: right;
}
.code {
  flex: 1;
  padding: 6px 0 0 6px;
}
.current-line {
  height: 24px;
  background: #ff0;
}
.vscroll {
  display: flex;
  flex-direction: column;
  width: 24px;
}
.raised {
  border: 2px solid #808080;
  border-top-color: #fcfcfc;
  border-left-color: #fcfcfc;
  background: #f0f0f0;
}
.split {
  height: 10px;
}
.sb {
  display: flex;
  align-items: center;
  justify-content: center;
  width: 24px;
  height: 25px;
}
.thumb {
  flex: 1;
}
.tri {
  border: 5px solid transparent;
}
.tri.up {
  border-bottom-color: #000;
  border-top: 0;
}
.tri.down {
  border-top-color: #000;
  border-bottom: 0;
}
.tri.left {
  border-right-color: #000;
  border-left: 0;
}
.tri.right {
  border-left-color: #000;
  border-right: 0;
}
.hscroll {
  display: flex;
  height: 26px;
  flex: none;
  padding: 0 3px;
  border-bottom: 3px solid #808080;
  border-left: 0;
}
.hscroll .sb {
  height: 23px;
}
.corner {
  width: 25px;
}

/* status */
.status {
  display: flex;
  align-items: flex-end;
  gap: 4px;
  height: 30px;
  flex: none;
  border-top: 2px solid #fff;
  font-family: 'Noto Sans CJK SC', sans-serif;
}
.status-help {
  flex: 1;
  padding-left: 2px;
}
.cell {
  height: 24px;
  padding-left: 3px;
  border: 1px solid #999;
  border-right-color: #fff;
  border-bottom: 0;
  white-space: nowrap;
}
.cell.pos {
  width: 218px;
}
.cell.fmt,
.cell.blank {
  width: 68px;
}
.cell.time {
  width: 514px;
}

/* taskbar */
.taskbar {
  display: flex;
  align-items: stretch;
  height: 60px;
  flex: none;
  background: linear-gradient(90deg, #d8e6e4 0, #cfdfe5 11%, #d9e7e6 24%, #d8e7e6 38%, #eaeaea 43%, #ececec 82%, #d6d8d2 88%, #d8dad4 100%);
}
.start {
  display: flex;
  align-items: center;
  width: 75px;
  padding-left: 24px;
}
.task {
  display: flex;
  align-items: center;
  gap: 4px;
  width: 242px;
  padding-left: 15px;
  background: linear-gradient(#0078d7, #0078d7) 6px 100% / 228px 3px no-repeat;
}
.task.active {
  background: linear-gradient(#0078d7, #0078d7) 0 100% / 100% 3px no-repeat #fafafa;
}
.pager {
  display: flex;
  flex-direction: column;
  justify-content: space-between;
  width: 40px;
  margin-left: auto;
  padding: 11px 0 9px 8px;
  border-left: 1px solid #fff;
}
.weather {
  display: flex;
  align-items: center;
  gap: 12px;
  width: 136px;
  margin-left: 16px;
  font-size: 22px;
}
.tray {
  display: flex;
  align-items: center;
  gap: 11px;
}
.tray .caret {
  margin-right: 38px;
}
.tray,
.clock {
  margin-left: 14px;
}
.clock {
  display: flex;
  flex-direction: column;
  align-items: center;
  width: 120px;
  margin-left: 11px;
  padding-top: 2px;
  font-size: 19px;
  line-height: 28px;
}
.notify {
  position: relative;
  width: 55px;
  padding-left: 16px;
}
.badge {
  position: absolute;
  left: 24px;
  bottom: 3px;
  width: 32px;
  height: 32px;
  border: 1px solid #777;
  border-radius: 16px;
  background: #d9dbd6;
  font-weight: 600;
  line-height: 30px;
  text-align: center;
}
.show-desktop {
  width: 7px;
  border-left: 1px solid #aaa;
}

/* input method */
.ime {
  position: absolute;
  right: 0;
  bottom: 60px;
  display: flex;
  align-items: center;
  justify-content: space-between;
  width: 303px;
  height: 38px;
  padding-right: 2px;
  border: 1px solid #bcd3ee;
  border-right: 0;
  background: #fff;
}
.ime-logo {
  position: relative;
  bottom: 3px;
}
.ime-mode {
  color: #0a6fdb;
  font-size: 22px;
  font-weight: 700;
}

/* dialogs */
.dialog {
  position: absolute;
  border: 1px solid #a0a0a0;
  background: #f0f0f0;
  box-shadow: 0 3px 16px rgba(0, 0, 0, 0.28);
  font-family: 'Noto Sans CJK SC', sans-serif;
}
.dlg-title {
  display: flex;
  align-items: center;
  justify-content: space-between;
  height: 44px;
  padding: 0 17px 0 11px;
  background: #fff;
}
.muted {
  color: #999;
}
.btn {
  width: 136px;
  height: 40px;
  border: 1px solid #adadad;
  background: #e1e1e1;
}
.btn:disabled {
  border-color: #bfbfbf;
  background: #ccc;
  color: #838383;
}
.btn.default {
  border: 2px solid #0078d7;
}
.size-grip {
  position: absolute;
  right: 3px;
  bottom: 2px;
}

.props {
  left: 86px;
  top: 76px;
  width: 747px;
}
.props-body {
  padding: 12px 11px 13px 11px;
}
.ptabs {
  display: flex;
  align-items: flex-end;
  padding-left: 2px;
}
.ptabs button {
  height: 30px;
  padding: 0 16px 0 5px;
  border: 1px solid #dcdcdc;
  border-left-width: 0;
  border-bottom: 0;
}
.ptabs button:first-child {
  padding-right: 6px;
  border-left-width: 1px;
}
.ptabs button:nth-child(2) {
  padding-right: 23px;
}
.ptabs button:nth-child(4) {
  padding-right: 5px;
  padding-left: 4px;
}
.ptabs button:last-child {
  padding-right: 22px;
}
.ptabs .on {
  position: relative;
  height: 33px;
  margin-bottom: -1px;
  padding: 0 25px 4px 8px;
  background: #fff;
}
.pane {
  display: flex;
  flex-direction: column;
  gap: 14px;
  width: 721px;
  padding: 26px 31px 51px 22px;
  border: 1px solid #dcdcdc;
  background: #fff;
}
.pane > p {
  padding-left: 9px;
  margin-bottom: 3px;
}
fieldset {
  min-width: 0;
  margin: 0;
  padding: 13px 19px 19px;
  border: 1px solid #dcdcdc;
}
legend {
  margin-left: -13px;
  padding: 0 2px;
}
fieldset .btn {
  display: block;
  width: 133px;
  margin: 36px 0 0 auto;
}
.env {
  align-self: flex-end;
  width: 232px;
  margin-top: 10px;
}
.actions {
  display: flex;
  justify-content: flex-end;
  gap: 13px;
  margin-top: 14px;
}

.envs {
  left: 1068px;
  top: 357px;
  width: 970px;
}
.envs-body {
  padding: 48px 19px 22px 20px;
}
.env-group {
  height: 363px;
  margin-bottom: 24px;
  padding: 26px 18px 0;
  border: 1px solid #dcdcdc;
}
.env-list {
  display: flex;
  height: 250px;
  border: 1px solid #828790;
  background: #fff;
  overflow: hidden;
}
.env-rows {
  flex: 1;
  position: relative;
  padding-top: 31px;
}
.env-row {
  height: 28px;
  padding-left: 579px;
  font-family: 'Open Sans', sans-serif;
  font-size: 17px;
  line-height: 28px;
  white-space: nowrap;
}
.hl {
  background: #f0f0f0;
}
.col-line {
  position: absolute;
  top: 1px;
  right: 0;
  width: 1px;
  height: 30px;
  background: #e5e5e5;
}
.no-scroll {
  width: 28px;
}
.flat-scroll {
  display: flex;
  flex-direction: column;
  width: 27px;
  margin-right: 1px;
  background: #f0f0f0;
}
.flat-scroll span {
  height: 84px;
  margin: 1px 1px auto 0;
  background: #cdcdcd;
}
.env-actions {
  display: flex;
  justify-content: flex-end;
  gap: 12px;
  margin-top: 21px;
}
.envs-bottom {
  display: flex;
  justify-content: flex-end;
  gap: 13px;
  padding-top: 2px;
  padding-right: 28px;
}

.edit {
  left: 866px;
  top: 367px;
  width: 827px;
  border-color: #d8d8d8;
  box-shadow: 0 6px 26px rgba(0, 0, 0, 0.4);
}
.edit-body {
  display: flex;
  gap: 23px;
  padding: 30px 22px 0 28px;
}
.path-list {
  flex: 1;
  height: 625px;
  padding: 1px 1px 0;
  border: 1px solid #828790;
  background: #fff;
}
.path-row {
  height: 28px;
  padding-left: 6px;
  border-bottom: 1px solid #f0f0f0;
  font-family: 'Open Sans', sans-serif;
  font-size: 17px;
  line-height: 28px;
}
.path-row.selected {
  position: relative;
  padding-left: 4px;
  background: #0078d7;
  box-shadow: inset 4px 0 #fff;
}
.path-row input {
  display: block;
  width: 295px;
  height: 28px;
  padding: 0 2px;
  border: 1px solid #646464;
  font: inherit;
  outline: 0;
}
.text-caret {
  position: absolute;
  left: 287px;
  top: 2px;
  width: 1px;
  height: 24px;
  background: #000;
}
.side {
  display: flex;
  flex-direction: column;
  gap: 20px;
  padding-top: 1px;
}
.side .spaced {
  margin-top: 30px;
}
.edit-bottom {
  display: flex;
  justify-content: flex-end;
  gap: 13px;
  padding: 30px 22px 25px;
}
</style>
